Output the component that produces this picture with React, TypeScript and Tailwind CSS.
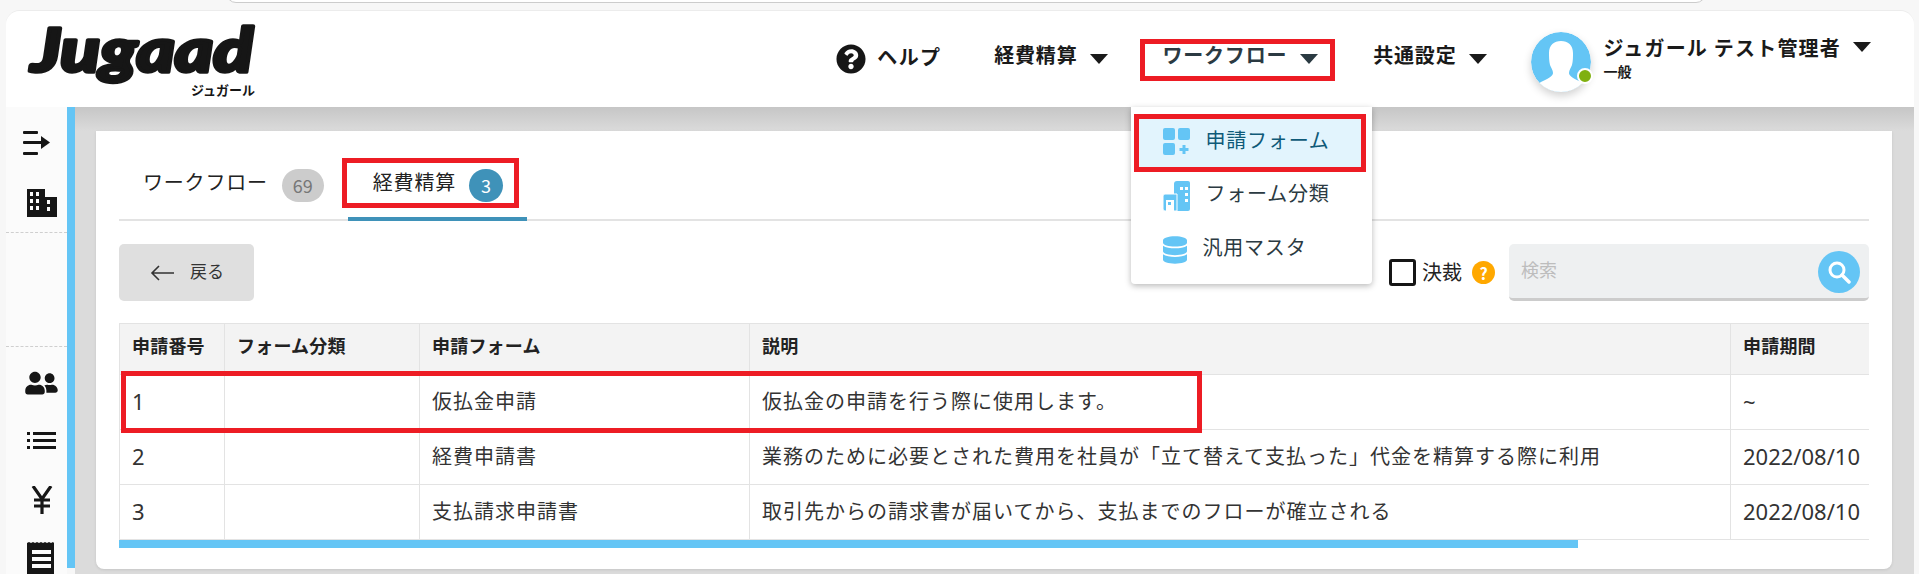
import { FaQuestionCircle, FaDatabase, FaUserFriends } from "react-icons/fa";

const FONT = "font-['Noto_Sans_CJK_JP','Noto_Sans',sans-serif]";

function Caret({ className = "" }: { className?: string }) {
  return (
    <svg width="18" height="10" viewBox="0 0 18 10" className={className}>
      <polygon points="0,0 18,0 9,10" fill="currentColor" />
    </svg>
  );
}

function Logo() {
  return (
    <div className="relative w-[228px] h-[64px]">
      <svg width="228" height="64" viewBox="0 0 228 64" className="overflow-visible">
        <text
          x="2"
          y="45"
          textLength="222"
          lengthAdjust="spacingAndGlyphs"
          fontFamily="Lato, sans-serif"
          fontWeight="900"
          fontStyle="italic"
          fontSize="60"
          fill="#161616"
          stroke="#161616"
          strokeWidth="3.5"
          strokeLinejoin="round"
        >
          Jugaad
        </text>
      </svg>
      <span className="absolute right-[2px] bottom-[-5px] text-[13px] font-bold leading-none text-[#161616]">
        ジュガール
      </span>
    </div>
  );
}

function NavItem({ label, color = "text-[#1a1a1a]" }: { label: string; color?: string }) {
  return (
    <div className={`flex items-center gap-[13px] ${color}`}>
      <span className="mb-[4px] text-[20px] font-bold tracking-[0.8px] leading-none">{label}</span>
      <Caret className="mt-[4px]" />
    </div>
  );
}

function Avatar() {
  return (
    <div className="relative mt-[5px] w-[60px] h-[60px] rounded-full shadow-[0_4px_8px_rgba(0,0,0,0.18)]">
      <svg width="60" height="60" viewBox="0 0 60 60" className="rounded-full">
        <circle cx="30" cy="30" r="30" fill="#64c5f5" />
        <path
          d="M30 9c-7 0-12 4-12 12 0 4 0 8 1 12 1 3 3 5 3 8 0 3-4 5-10 8-3 1-5 3-6 5 6 4 14 6 24 6s18-2 24-6c-1-2-3-4-6-5-6-3-10-5-10-8 0-3 2-5 3-8 1-4 1-8 1-12 0-8-5-12-12-12z"
          fill="#fff"
        />
      </svg>
      <span className="absolute right-[-2px] bottom-[8px] w-[16px] h-[16px] rounded-full bg-[#7fb00f] border-[2px] border-white" />
    </div>
  );
}

function Header() {
  return (
    <header className="h-[96px] flex items-center bg-white rounded-t-[14px] relative z-10 pl-[23px] pr-[43px]">
      <Logo />
      <nav className="ml-auto flex items-center text-[#1a1a1a]">
        <FaQuestionCircle className="w-[30px] h-[30px] text-[#161616]" />
        <span className="ml-[11px] mb-[5px] text-[20px] font-bold leading-none tracking-[1.3px]">ヘルプ</span>
        <div className="ml-[53px] mb-[5px]">
          <NavItem label="経費精算" />
        </div>
        <div className="relative ml-[54px] mb-[5px]">
          <NavItem label="ワークフロー" color="text-[#2b3a42]" />
          <div className="absolute left-[-22px] right-[-17px] top-[-6px] bottom-[-12px] border-[5px] border-[#ed1c24]" />
          <Dropdown />
        </div>
        <div className="ml-[55px] mb-[5px]">
          <NavItem label="共通設定" />
        </div>
        <div className="ml-[44px] flex items-center">
          <Avatar />
          <div className="ml-[12px] mb-[4px]">
            <div className="flex items-center gap-[12px]">
              <span className="text-[20px] font-bold leading-[24px] whitespace-nowrap tracking-[1.2px]">
                ジュガール テスト管理者
              </span>
              <Caret className="mb-[1px]" />
            </div>
            <div className="text-[14px] font-bold leading-[16px] mt-[3px]">一般</div>
          </div>
        </div>
      </nav>
    </header>
  );
}

function Dropdown() {
  return (
    <div className="absolute left-[-31px] top-[62px] w-[241px] h-[177px] bg-white rounded-b-[4px] shadow-[0_2px_6px_rgba(0,0,0,0.28)] font-normal">
      <div className="mt-[7px] ml-[3px] mr-[6px] h-[58px] pl-[29px] flex items-center gap-[15px] bg-[#e2f4fd] border-[5px] border-[#ed1c24] text-[#0f5a78]">
        <svg width="27" height="27" viewBox="0 0 27 27" className="ml-[-5px] mb-[2px] shrink-0">
          <rect x="0" y="0" width="12" height="12" rx="2" fill="#64c5f5" />
          <rect x="15" y="0" width="12" height="12" rx="2" fill="#64c5f5" />
          <rect x="0" y="15" width="12" height="12" rx="2" fill="#64c5f5" />
          <path d="M19.5 17h3v3h3v3h-3v3h-3v-3h-3v-3h3z" fill="#64c5f5" />
        </svg>
        <span className="mb-[6px] text-[20px] leading-none whitespace-nowrap tracking-[0.8px]">申請フォーム</span>
      </div>
      <div className="h-[30px] mt-[9px] pl-[32px] flex items-center gap-[15px] text-[#2b3a42]">
        <svg width="27" height="30" viewBox="0 0 27 30" className="shrink-0">
          <path d="M11 3a3 3 0 0 1 3-3h11a2 2 0 0 1 2 2v26a2 2 0 0 1-2 2H11z" fill="#64c5f5" />
          <path d="M0 15a2 2 0 0 1 2-2h12v17H2a2 2 0 0 1-2-2z" fill="#64c5f5" stroke="#fff" strokeWidth="1" />
          <rect x="3" y="19" width="8" height="11" fill="#fff" />
          <rect x="5" y="21" width="3" height="3" fill="#64c5f5" />
          <rect x="17" y="6" width="3" height="3" fill="#fff" />
          <rect x="22" y="6" width="3" height="3" fill="#fff" />
          <rect x="22" y="12" width="3" height="3" fill="#fff" />
          <rect x="22" y="18" width="3" height="3" fill="#fff" />
        </svg>
        <span className="mb-[6px] text-[20px] leading-none whitespace-nowrap tracking-[0.8px]">フォーム分類</span>
      </div>
      <div className="h-[30px] mt-[24px] pl-[32px] flex items-center gap-[15px] text-[#2b3a42]">
        <FaDatabase className="w-[24px] h-[30px] text-[#64c5f5] shrink-0" />
        <span className="mb-[6px] text-[20px] leading-none whitespace-nowrap tracking-[0.8px]">汎用マスタ</span>
      </div>
    </div>
  );
}

function Sidebar() {
  return (
    <aside className="w-[61px] shrink-0 bg-[#fbfbfb] flex flex-col text-[#161616]">
      <div className="h-[132px] border-b border-dashed border-[#cfcfcf] pt-[24px]">
        <svg width="28" height="24" viewBox="0 0 28 24" className="ml-[17px]">
          <rect x="0" y="0" width="15" height="3" rx="1" fill="currentColor" />
          <rect x="0" y="10" width="20" height="3" rx="1" fill="currentColor" />
          <polygon points="18,5 27,11.5 18,18" fill="currentColor" />
          <rect x="0" y="21" width="15" height="3" rx="1" fill="currentColor" />
        </svg>
        <svg width="30" height="28" viewBox="0 0 30 28" className="ml-[21px] mt-[34px]">
          <path
            fillRule="evenodd"
            d="M0 0h18v8h12v20H0zM3 3v4h3V3zm6 0v4h3V3zM3 10v4h3v-4zm6 0v4h3v-4zm0 7v4h3v-4zM3 17v4h3v-4zm17-6v4h3v-4zm0 7v4h3v-4z"
            fill="currentColor"
          />
        </svg>
      </div>
      <div className="h-[120px] border-b border-dashed border-[#cfcfcf]" />
      <div className="flex-1 overflow-visible">
        <FaUserFriends className="w-[33px] h-[26px] ml-[19px] mt-[23px]" />
        <svg width="29" height="17" viewBox="0 0 29 17" className="ml-[21px] mt-[36px]">
          <rect x="0" y="0" width="3" height="3" fill="currentColor" />
          <rect x="6" y="0" width="23" height="3" fill="currentColor" />
          <rect x="0" y="7" width="3" height="3" fill="currentColor" />
          <rect x="6" y="7" width="23" height="3" fill="currentColor" />
          <rect x="0" y="14" width="3" height="3" fill="currentColor" />
          <rect x="6" y="14" width="23" height="3" fill="currentColor" />
        </svg>
        <svg width="22" height="28" viewBox="0 0 22 28" className="ml-[25px] mt-[37px]">
          <path d="M2 0l9 13 9-13M11 13v15M3 14h16M3 20h16" fill="none" stroke="currentColor" strokeWidth="3.2" />
        </svg>
        <svg width="29" height="32" viewBox="0 0 29 32" className="ml-[21px] mt-[28px]">
          <path
            fillRule="evenodd"
            d="M0 1l2-1 2 1 2-1 2 1 2-1 2 1 2-1 2 1 2-1 2 1 2-1 2 1 2-1 1 1v31H0zM5 8v4h19V8zm0 7v4h19v-4zm0 7v4h19v-4z"
            fill="currentColor"
          />
        </svg>
      </div>
    </aside>
  );
}

function Tabs() {
  return (
    <div className="h-[90px] border-b-[2px] border-[#e3e3e3] flex items-start pt-[38px]">
      <div className="flex items-center h-[33px] pl-[24px]">
        <span className="mb-[7px] text-[20px] leading-none tracking-[0.8px] text-[#222]">ワークフロー</span>
        <span className="ml-[14px] w-[42px] h-[33px] rounded-full bg-[#cccccc] text-[#777] text-[18px] flex items-center justify-center">
          69
        </span>
      </div>
      <div className="relative ml-[24px] w-[179px] h-[50px] mt-0">
        <div className="h-[33px] flex items-center pl-[25px]">
          <span className="mb-[7px] text-[20px] leading-none tracking-[0.8px] text-[#222]">経費精算</span>
          <span className="ml-[13px] w-[34px] h-[33px] rounded-full bg-[#3f92b9] text-white text-[18px] flex items-center justify-center">
            3
          </span>
        </div>
        <div className="absolute left-[-6px] top-[-11px] w-[177px] h-[50px] border-[5px] border-[#ed1c24]" />
        <div className="absolute left-0 right-0 top-[48px] h-[4px] bg-[#3f92b9]" />
      </div>
    </div>
  );
}

function Toolbar() {
  return (
    <div className="mt-[23px] flex items-center h-[57px]">
      <button className="w-[135px] h-[57px] rounded-[5px] bg-[#dfdfdf] flex items-center pl-[31px] gap-[16px] text-[#333]">
        <svg width="24" height="16" viewBox="0 0 24 16">
          <path d="M24 8H2M9 1L2 8l7 7" fill="none" stroke="#333" strokeWidth="1.6" />
        </svg>
        <span className="mb-[4px] text-[17px] leading-none">戻る</span>
      </button>
      <div className="ml-auto flex items-center">
        <span className="w-[27px] h-[27px] rounded-[3px] border-[3px] border-[#161616] bg-white" />
        <span className="ml-[6px] mb-[2px] text-[20px] leading-none text-[#222]">決裁</span>
        <span className="ml-[10px] w-[23px] h-[23px] rounded-full bg-[#ffa800] text-white text-[16px] font-bold flex items-center justify-center">
          ?
        </span>
        <div className="ml-[14px] w-[360px] h-[57px] rounded-[5px] bg-[#eef0f1] border-b-[3px] border-[#cccccc] flex items-center pl-[12px] pr-[9px]">
          <span className="mb-[4px] text-[18px] leading-none text-[#bdbdbd]">検索</span>
          <span className="ml-auto w-[42px] h-[42px] rounded-full bg-[#64c5f5] flex items-center justify-center mt-[2px]">
            <svg width="24" height="24" viewBox="0 0 24 24">
              <circle cx="10" cy="10" r="7" fill="none" stroke="#fff" strokeWidth="3" />
              <path d="M15 15l7 7" stroke="#fff" strokeWidth="3.5" strokeLinecap="round" />
            </svg>
          </span>
        </div>
      </div>
    </div>
  );
}

const rows = [
  { no: "1", form: "仮払金申請", desc: "仮払金の申請を行う際に使用します。", period: "~" },
  { no: "2", form: "経費申請書", desc: "業務のために必要とされた費用を社員が「立て替えて支払った」代金を精算する際に利用", period: "2022/08/10" },
  { no: "3", form: "支払請求申請書", desc: "取引先からの請求書が届いてから、支払までのフローが確立される", period: "2022/08/10" },
];

function FormTable() {
  const th = "h-[51px] px-[12px] pb-[7px] text-left text-[18px] font-bold text-[#222] tracking-[0.2px] border border-[#e3e3e3] bg-[#f3f3f3] whitespace-nowrap";
  const td = "h-[55px] px-[12px] pb-[3px] text-[20px] text-[#333] tracking-[1px] border border-[#e3e3e3] whitespace-nowrap";
  const tdLatin = "h-[55px] px-[12px] pb-[2px] text-[22px] font-['Noto_Sans',sans-serif] text-[#333] border border-[#e3e3e3] whitespace-nowrap";
  return (
    <div className="relative mt-[22px]">
      <div className="overflow-hidden">
        <table className="table-fixed border-collapse w-[1800px]">
          <colgroup>
            <col className="w-[105px]" />
            <col className="w-[195px]" />
            <col className="w-[330px]" />
            <col className="w-[981px]" />
            <col className="w-[189px]" />
          </colgroup>
          <thead>
            <tr>
              <th className={th}>申請番号</th>
              <th className={th}>フォーム分類</th>
              <th className={th}>申請フォーム</th>
              <th className={th}>説明</th>
              <th className={th}>申請期間</th>
            </tr>
          </thead>
          <tbody>
            {rows.map((row) => (
              <tr key={row.no}>
                <td className={tdLatin}>{row.no}</td>
                <td className={td}></td>
                <td className={td}>{row.form}</td>
                <td className={td}>{row.desc}</td>
                <td className={tdLatin}>{row.period}</td>
              </tr>
            ))}
          </tbody>
        </table>
      </div>
      <div className="h-[8px] w-[1459px] bg-[#64c5f5]" />
      <div className="absolute left-[2px] top-[48px] w-[1081px] h-[62px] border-[5px] border-[#ed1c24]" />
    </div>
  );
}

export default function App() {
  return (
    <div className={`w-[1919px] h-[574px] overflow-hidden bg-[#f7f7f7] ${FONT}`}>
      <div className="h-[10px] relative">
        <div className="absolute left-[226px] right-[213px] top-[-20px] h-[23px] bg-white border border-[#cccccc] rounded-[10px]" />
      </div>
      <div className="ml-[6px] mr-[5px] h-[564px] flex flex-col border-t border-[#ececec] rounded-t-[14px]">
        <Header />
        <div className="flex flex-1 min-h-0">
          <Sidebar />
          <div className="w-[8px] h-[461px] shrink-0 bg-[#64c5f5]" />
          <main className="flex-1 min-w-0 bg-[#dbdbdb] bg-[linear-gradient(to_bottom,#c6c6c6,#dbdbdb_24px)] pt-[24px] pl-[21px] pr-[22px]">
            <section className="h-[438px] bg-white rounded-b-[8px] px-[23px] shadow-[0_1px_3px_rgba(0,0,0,0.1)]">
              <Tabs />
              <Toolbar />
              <FormTable />
            </section>
          </main>
        </div>
      </div>
    </div>
  );
}
